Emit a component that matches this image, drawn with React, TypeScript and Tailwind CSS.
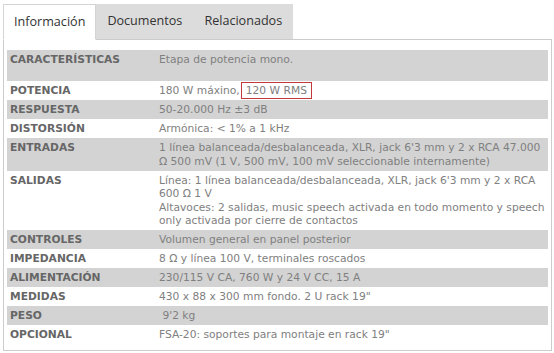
const rows: { label: string; value: React.ReactNode; cls?: string }[] = [
  { label: 'CARACTERÍSTICAS', value: 'Etapa de potencia mono.', cls: 'pb-[15px]' },
  {
    label: 'POTENCIA',
    value: (
      <>
        180 W máxino,
        <span className="inline-block border border-[#c0393b] ml-px px-[4px] leading-[15px] -my-[2px]">120 W RMS</span>
      </>
    ),
  },
  { label: 'RESPUESTA', value: '50-20.000 Hz ±3 dB' },
  { label: 'DISTORSIÓN', value: 'Armónica: < 1% a 1 kHz' },
  {
    label: 'ENTRADAS',
    value: "1 línea balanceada/desbalanceada, XLR, jack 6'3 mm y 2 x RCA 47.000 Ω 500 mV (1 V, 500 mV, 100 mV seleccionable internamente)",
  },
  {
    label: 'SALIDAS',
    value: (
      <>
        Línea: 1 línea balanceada/desbalanceada, XLR, jack 6'3 mm y 2 x RCA 600 Ω 1 V
        <br />
        Altavoces: 2 salidas, music speech activada en todo momento y speech only activada por cierre de contactos
      </>
    ),
  },
  { label: 'CONTROLES', value: 'Volumen general en panel posterior' },
  { label: 'IMPEDANCIA', value: '8 Ω y línea 100 V, terminales roscados' },
  { label: 'ALIMENTACIÓN', value: '230/115 V CA, 760 W y 24 V CC, 15 A' },
  { label: 'MEDIDAS', value: '430 x 88 x 300 mm fondo. 2 U rack 19"' },
  { label: 'PESO', value: "\u00a09'2 kg" },
  { label: 'OPCIONAL', value: 'FSA-20: soportes para montaje en rack 19"' },
]

const tabs = ['Información', 'Documentos', 'Relacionados']

export default function App() {
  return (
    <div className="w-[554px] h-[353px] bg-white overflow-hidden pt-[4px] pl-[3px] pr-[2px]">
      <div className="flex font-['Open_Sans',sans-serif] text-[12.6px] text-[#333] relative z-10">
        {tabs.map((t, i) => (
          <div
            key={t}
            className={
              i === 0
                ? 'h-[36px] px-[10px] flex items-center bg-white border border-[#d4d4d4] border-b-white -mb-px'
                : 'h-[35px] px-[11px] flex items-center bg-[#dcdcdc]'
            }
          >
            {t}
          </div>
        ))}
      </div>
      <div className="border border-[#cccccc] pt-[10px] pb-[6px] px-[3px] font-['DejaVu_Sans',sans-serif] text-[10.7px] leading-[13.5px]">
        {rows.map((r, i) => (
          <div
            key={r.label}
            className={`flex py-[2.75px] ${i % 2 === 0 ? 'bg-[#d3d3d3]' : 'bg-white'} ${r.cls ?? ''}`}
          >
            <div className="w-[152px] shrink-0 pl-[3px] font-bold text-[#666666]">{r.label}</div>
            <div className="flex-1 text-[#808080] pr-[2px]">{r.value}</div>
          </div>
        ))}
      </div>
    </div>
  )
}
